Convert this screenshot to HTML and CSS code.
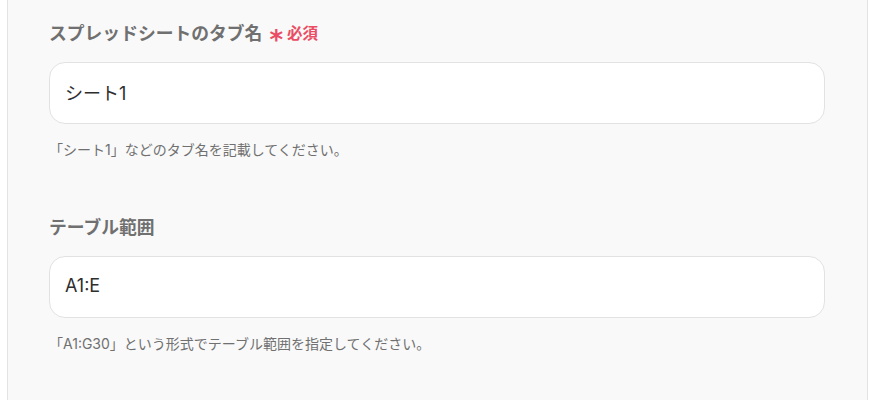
FILE: index.html
```html
<!DOCTYPE html>
<html lang="ja">
<head>
<meta charset="utf-8">
<link rel="stylesheet" href="styles.css">
</head>
<body>
<div class="panel">
  <div class="field">
    <div class="label">スプレッドシートのタブ名<span class="req"><span class="star">*</span>必須</span></div>
    <div class="input">シート1</div>
    <div class="help">「シート1」などのタブ名を記載してください。</div>
  </div>
  <div class="field">
    <div class="label">テーブル範囲</div>
    <div class="input">A1:E</div>
    <div class="help">「A1:G30」という形式でテーブル範囲を指定してください。</div>
  </div>
</div>
</body>
</html>
```
FILE: styles.css
```css
html, body {
  margin: 0;
  padding: 0;
  background: #ffffff;
  height: 100%;
  overflow: hidden;
}
body {
  font-family: "Inter", "Noto Sans CJK JP", sans-serif;
}
.panel {
  margin-left: 7px;
  width: 861px;
  height: 100%;
  background: #f9f9f9;
  border-left: 1px solid #e3e3e3;
  border-right: 1px solid #e3e3e3;
  padding: 22px 42px 0 41px;
  box-sizing: border-box;
  display: flex;
  flex-direction: column;
  gap: 56px;
}
.field {
  display: flex;
  flex-direction: column;
}
.label {
  height: 24px;
  font-size: 17.8px;
  line-height: 24px;
  font-weight: 700;
  color: #707070;
  display: flex;
  align-items: center;
}
.req {
  color: #ea4d64;
  font-size: 15.5px;
  line-height: 24px;
  margin-left: 7px;
  display: inline-flex;
  align-items: center;
}
.star {
  font-family: "DejaVu Sans", sans-serif;
  font-size: 26px;
  font-weight: 700;
  line-height: 16px;
  height: 16px;
  margin-right: 4px;
  position: relative;
  top: 6px;
}
.input {
  margin-top: 16px;
  height: 62px;
  box-sizing: border-box;
  background: #ffffff;
  border: 1px solid #e2e2e2;
  border-radius: 16px;
  padding: 0 15px 3px;
  display: flex;
  align-items: center;
  font-size: 18px;
  color: #2e2e2e;
}
.help {
  margin-top: 16px;
  font-size: 14px;
  line-height: 20px;
  color: #707070;
}
```
